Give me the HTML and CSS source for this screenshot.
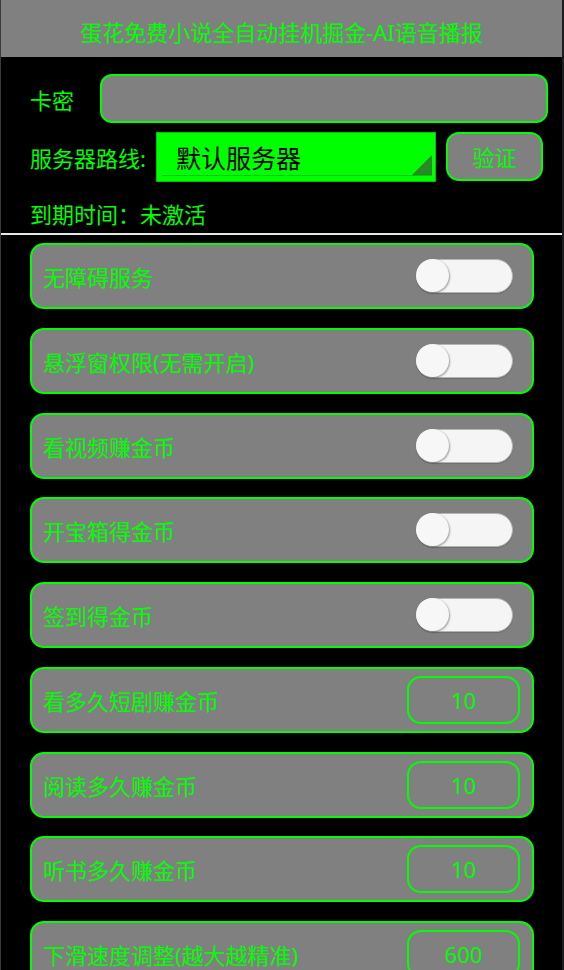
FILE: index.html
```html
<!DOCTYPE html>
<html lang="zh">
<head>
<meta charset="utf-8">
<title>蛋花免费小说全自动挂机掘金</title>
<link rel="stylesheet" href="styles.css">
</head>
<body>
<div class="app">
  <header class="title-bar">蛋花免费小说全自动挂机掘金-AI语音播报</header>

  <div class="form-row row-key">
    <span class="label">卡密</span>
    <div class="text-input"></div>
  </div>

  <div class="form-row row-server">
    <span class="label">服务器路线:</span>
    <div class="select">
      <span class="select-text">默认服务器</span>
      <span class="select-line"></span>
      <span class="select-arrow"></span>
    </div>
    <div class="btn">验证</div>
  </div>

  <div class="expire">到期时间：未激活</div>
  <div class="divider"></div>

  <div class="list">
    <div class="card"><span class="card-label">无障碍服务</span><span class="switch"><span class="knob"></span></span></div>
    <div class="card"><span class="card-label">悬浮窗权限(无需开启)</span><span class="switch"><span class="knob"></span></span></div>
    <div class="card"><span class="card-label">看视频赚金币</span><span class="switch"><span class="knob"></span></span></div>
    <div class="card"><span class="card-label">开宝箱得金币</span><span class="switch"><span class="knob"></span></span></div>
    <div class="card"><span class="card-label">签到得金币</span><span class="switch"><span class="knob"></span></span></div>
    <div class="card"><span class="card-label">看多久短剧赚金币</span><span class="num">10</span></div>
    <div class="card"><span class="card-label">阅读多久赚金币</span><span class="num">10</span></div>
    <div class="card"><span class="card-label">听书多久赚金币</span><span class="num">10</span></div>
    <div class="card"><span class="card-label">下滑速度调整(越大越精准)</span><span class="num">600</span></div>
  </div>
</div>
</body>
</html>
```

FILE: styles.css
```css
html, body {
  margin: 0;
  padding: 0;
  background: #000;
}
body {
  width: 564px;
  height: 970px;
  overflow: hidden;
  font-family: "Noto Sans", "Noto Sans CJK SC", sans-serif;
  color: #00ff00;
}
.app {
  height: 970px;
  box-sizing: border-box;
  border-left: 1px solid #3a3a3a;
  border-right: 2px solid #1c1c24;
  overflow: hidden;
}
.title-bar {
  height: 57px;
  box-sizing: border-box;
  padding-top: 5px;
  background: #808080;
  display: flex;
  align-items: center;
  justify-content: center;
  font-size: 22px;
  color: #00ff00;
  white-space: nowrap;
}
.form-row {
  display: flex;
  align-items: center;
}
.label {
  font-size: 22px;
  white-space: nowrap;
}
.row-key {
  margin-top: 17px;
  padding-left: 29px;
  padding-right: 14px;
  gap: 26px;
}
.text-input {
  flex: 1;
  height: 49px;
  box-sizing: border-box;
  background: #808080;
  border: 2px solid #00ff00;
  border-radius: 12px;
}
.row-server {
  margin-top: 9px;
  padding-left: 29px;
  gap: 10px;
}
.select {
  position: relative;
  width: 280px;
  height: 50px;
  box-sizing: border-box;
  background: #00ff00;
  border: 1px solid #00c400;
  display: flex;
  align-items: center;
  padding-left: 19px;
  padding-bottom: 1px;
}
.select-text {
  font-size: 25px;
  color: #000;
}
.select-line {
  position: absolute;
  left: 5px;
  right: 3px;
  bottom: 5px;
  height: 1px;
  background: #00c800;
}
.select-arrow {
  position: absolute;
  right: 3px;
  bottom: 6px;
  width: 0;
  height: 0;
  border-left: 20px solid transparent;
  border-bottom: 20px solid #268a26;
}
.btn {
  width: 97px;
  height: 49px;
  box-sizing: border-box;
  margin-top: -2px;
  background: #808080;
  border: 2px solid #00ff00;
  border-radius: 13px;
  display: flex;
  align-items: center;
  justify-content: center;
  font-size: 22px;
}
.expire {
  margin-top: 17px;
  padding-left: 29px;
  font-size: 22px;
  line-height: 30px;
}
.divider {
  margin-top: 4px;
  height: 2px;
  background: #e6e6e6;
}
.list {
  padding: 8px 28px 0 29px;
  display: flex;
  flex-direction: column;
  gap: 18.75px;
}
.card {
  height: 66px;
  flex-shrink: 0;
  box-sizing: border-box;
  background: #808080;
  border: 2px solid #00ff00;
  border-radius: 14px;
  display: flex;
  align-items: center;
  justify-content: space-between;
  padding-left: 11px;
  padding-right: 19px;
}
.card-label {
  font-size: 22px;
  white-space: nowrap;
}
.switch {
  position: relative;
  width: 97px;
  height: 34px;
  box-sizing: border-box;
  background: #f5f5f5;
  border: 1px solid #b4b4b4;
  border-radius: 17px;
  box-shadow: 0 1px 1px rgba(0,0,0,0.15);
}
.knob {
  position: absolute;
  left: -1px;
  top: -1px;
  width: 33px;
  height: 33px;
  border-radius: 50%;
  background: #f7f7f7;
  box-shadow: 1px 1px 2px rgba(0,0,0,0.35);
}
.card .num {
  width: 113px;
  height: 48px;
  box-sizing: border-box;
  margin-right: -7px;
  border: 2px solid #00ff00;
  border-radius: 14px;
  display: flex;
  align-items: center;
  justify-content: center;
  font-size: 22px;
}
```
